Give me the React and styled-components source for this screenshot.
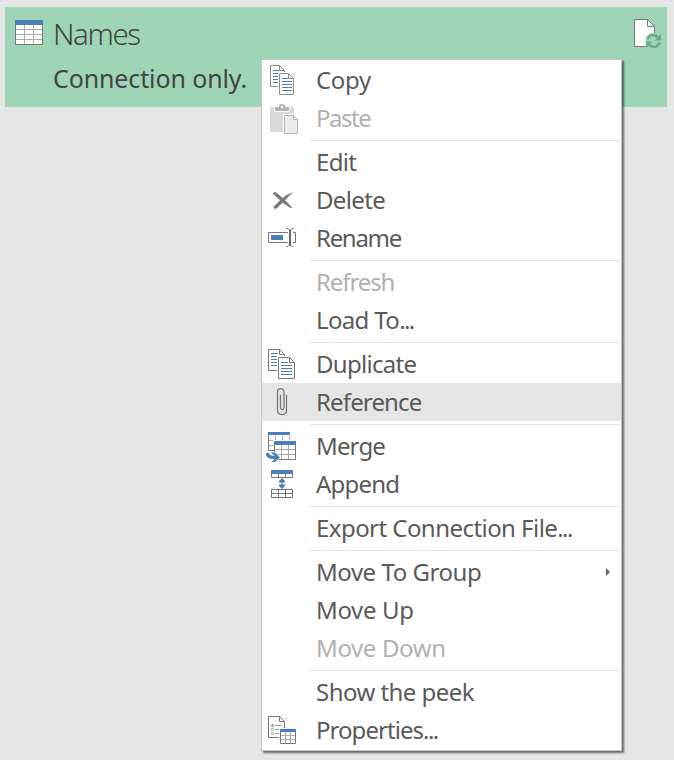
import React from "react";
import styled, { createGlobalStyle } from "styled-components";

const GlobalStyle = createGlobalStyle`
  * { box-sizing: border-box; }
  html, body { margin: 0; height: 760px; overflow: hidden; background: #e6e6e6; }
  body { font-family: "Noto Sans", "Open Sans", sans-serif; }
`;

const Page = styled.main`
  position: relative;
  width: 674px;
  height: 760px;
  padding: 7px 7px 0 5px;
  background: #e6e6e6;
`;

const QueryCard = styled.section`
  display: grid;
  grid-template-columns: 48px 1fr 39px;
  height: 100px;
  background: #9fd5b7;
`;

const QueryText = styled.div`
  display: flex;
  flex-direction: column;
  white-space: nowrap;
  color: #444;
`;

const QueryName = styled.h1`
  margin: 5px 0 0;
  height: 44px;
  font-size: 29.5px;
  line-height: 44px;
  font-weight: 300;
  letter-spacing: ${(p) => p.$spacing}px;
`;

const QueryStatus = styled.p`
  margin: 0;
  height: 44px;
  font-size: 25px;
  line-height: 44px;
  letter-spacing: ${(p) => p.$spacing}px;
`;

const Icon = styled.svg`
  display: block;
  flex: none;
  overflow: visible;
`;

const Menu = styled.div`
  position: absolute;
  left: 261px;
  top: 59px;
  width: 361px;
  height: 692px;
  padding: 1px 0;
  background: #fff;
  border: 1px solid #c6c6c6;
  box-shadow: 2px 2px 2px rgba(0, 0, 0, 0.55);
`;

const MenuItem = styled.div`
  display: grid;
  grid-template-columns: 48px 1fr 20px;
  align-items: center;
  height: 38px;
  color: ${(p) => (p.$disabled ? "#b1b1b1" : "#5a5a5a")};
  background: ${(p) => (p.$active ? "#e6e6e6" : "transparent")};
`;

const Label = styled.span`
  padding-left: 6px;
  font-size: 24px;
  line-height: 38px;
  white-space: nowrap;
  letter-spacing: ${(p) => p.$spacing || 0}px;
`;

const Ellipsis = styled.span`
  letter-spacing: -1.6px;
`;

const Separator = styled.div`
  height: 6px;
  padding: 3px 1px 0 48px;

  &::before {
    content: "";
    display: block;
    height: 1px;
    background: #dfe1e4;
  }
`;

const GRAY = "#777";
const BLUE = "#4a80ba";

function MenuIcon({ children }) {
  return <Icon width="48" height="38" viewBox="0 0 48 38" fill="none">{children}</Icon>;
}

function Sheet({ x, y, w, h, lines, stroke = GRAY, lineColor = BLUE }) {
  const f = 5;
  return (
    <g transform={`translate(${x} ${y})`}>
      <path d={`M.5 .5H${w - f - 0.5}L${w - 0.5} ${f + 0.5}V${h - 0.5}H.5Z`} fill="#fff" stroke={stroke} />
      <path d={`M${w - f - 0.5} .5V${f + 0.5}H${w - 0.5}`} stroke={stroke} />
      {lines.map(([ly, x2]) => <path key={ly} d={`M3 ${ly + 0.5}H${x2}`} stroke={lineColor} />)}
    </g>
  );
}

function CopyIcon() {
  return (
    <MenuIcon>
      <Sheet x={8} y={4} w={15} h={22} lines={[[5, 9], [8, 12], [11, 12], [14, 12], [17, 12]]} stroke="#8c8c8c" />
      <path d="M16 11H29L34 16V34H16Z" fill="#fff" />
      <Sheet x={17} y={12} w={15} h={22} lines={[[5, 9], [8, 13], [11, 13], [14, 13], [17, 13]]} stroke="#8c8c8c" />
    </MenuIcon>
  );
}

function DuplicateIcon() {
  return (
    <MenuIcon>
      <Sheet x={6} y={4} w={17} h={22} lines={[[4, 10], [7, 13], [10, 13], [13, 13], [16, 13]]} />
      <path d="M15 11H29L34 16V35H15Z" fill="#fff" />
      <Sheet x={16} y={12} w={17} h={22} lines={[[5, 10], [8, 14], [11, 14], [14, 14], [17, 14]]} />
    </MenuIcon>
  );
}

function PasteIcon() {
  return (
    <MenuIcon>
      <rect x="8" y="8" width="24" height="25" rx="1" fill="#dadada" />
      <path d="M12 7H28V13H12Z" fill="#fff" />
      <path d="M13 8H17V7Q17 5 20 5T23 7V8H27V12H13Z" fill="#b5b5b5" />
      <circle cx="20" cy="8" r="1.2" fill="#fff" />
      <path d="M21 15H34L38 19V36H21Z" fill="#fff" />
      <path d="M22.5 16.5H31.5L35.5 20.5V34.5H22.5Z" fill="#ececec" stroke="#b9b9b9" />
      <path d="M31.5 16.5V20.5H35.5" stroke="#b9b9b9" />
    </MenuIcon>
  );
}

function DeleteIcon() {
  return (
    <MenuIcon>
      <path d="M11 12.5Q12.5 10.5 14.5 12L20.7 17.2Q25 13.2 30.5 11.8Q26 15.5 22.9 19.3L30 26.5H28L20.8 21.6Q17.5 24 15 27Q12.5 28.5 11.5 26Q15 22.5 18.3 19.2Z" fill={GRAY} stroke={GRAY} strokeWidth=".4" />
    </MenuIcon>
  );
}

function RenameIcon() {
  return (
    <MenuIcon>
      <path d="M26 13.5H6.5V23.5H26M31 13.5H33.5V23.5H31" stroke={GRAY} />
      <path d="M9 16H21V21H9Z" fill={BLUE} />
      <path d="M28 11V27" stroke="#666" strokeWidth="2" />
      <path d="M24.5 9.5H26L28 11.5L30 9.5H31.5M24.5 27.5H26L28 25.5L30 27.5H31.5" stroke="#666" />
    </MenuIcon>
  );
}

function ClipIcon() {
  return (
    <MenuIcon>
      <path d="M24.5 12V27.5Q24.5 31.5 20 31.5T15.5 27.5V9Q15.5 5.5 18.5 5.5T22 9V24Q22 26.5 20.3 26.5T18.5 24V12" stroke={GRAY} strokeWidth="1.25" />
    </MenuIcon>
  );
}

function MergeIcon() {
  return (
    <MenuIcon>
      <path d="M6.5 8V23.5H12" stroke={GRAY} />
      <path d="M13.5 9V14M20.5 9V14M27.5 9V14M7 13.5H11M7 18.5H11" stroke="#aaa" />
      <path d="M6 5H28V8H6Z" fill={BLUE} />
      <path d="M11 13H35V18H11Z" fill="#fff" />
      <path d="M12.5 18V32.5H33.5V18" stroke={GRAY} fill="#fff" />
      <path d="M12 14H34V18H12Z" fill={BLUE} />
      <path d="M19.5 18V32M26.5 18V32M13 22.5H33M13 27.5H33" stroke="#aaa" />
      <path d="M3.7 26H6.8Q8 29 12.5 28.8L9 25.5H13L18 30.5L13 35H9.5L12.5 32Q4 32.5 3.7 26Z" fill={BLUE} stroke="#fff" strokeWidth="1.2" paintOrder="stroke" />
    </MenuIcon>
  );
}

function AppendIcon() {
  return (
    <MenuIcon>
      <path d="M9.5 8V12.5H30.5V8M16.5 8V12M23.5 8V12" stroke={GRAY} />
      <path d="M9 5H31V9H9Z" fill={BLUE} />
      <path d="M9.5 24.5H30.5V32.5H9.5ZM9.5 28.5H30.5M16.5 24V33M23.5 24V33" stroke={GRAY} />
      <path d="M20 13L23 16V17.5H17V16ZM20 24L23 21V19.5H17V21Z" fill={BLUE} />
      <path d="M19 15H21V23H19Z" fill={BLUE} />
      <path d="M17 18.5H23" stroke="#fff" opacity=".65" />
    </MenuIcon>
  );
}

function PropertiesIcon() {
  return (
    <MenuIcon>
      <path d="M17 26.5H6.5V5.5H17.5L22.5 10.5V17M17.5 5.5V10.5H22.5" stroke={GRAY} />
      <g stroke="#999">
        <circle cx="10.5" cy="14.5" r="1.1" fill="#999" />
        <circle cx="10.5" cy="18.5" r="1.1" />
        <circle cx="10.5" cy="22.5" r="1.1" />
        <path d="M13 14.5H20M13 18.5H17M13 22.5H17" />
      </g>
      <path d="M18.5 21V32.5H33.5V21" stroke={GRAY} fill="#fff" />
      <path d="M18 18H34V21H18Z" fill={BLUE} />
      <path d="M23.5 21V32M28.5 21V32M19 24.5H33M19 28.5H33" stroke="#aaa" />
    </MenuIcon>
  );
}

function TableIcon() {
  return (
    <Icon width="48" height="50" viewBox="0 0 48 50" fill="none">
      <path d="M10.5 17V37.5H37.5V17Z" fill="#fff" stroke={GRAY} />
      <path d="M10 13H38V18H10Z" fill={BLUE} />
      <path d="M19.5 18V37M28.5 18V37M11 22.5H37M11 27.5H37M11 32.5H37" stroke="#aaa" />
    </Icon>
  );
}

function RefreshPageIcon() {
  return (
    <Icon width="34" height="50" viewBox="0 0 34 50" fill="none">
      <path d="M6.5 12.5H19.5L26.5 19.5V39.5H6.5Z" fill="#fff" stroke={GRAY} />
      <path d="M19.5 12.5V19.5H26.5" stroke={GRAY} />
      <circle cx="25.5" cy="34" r="8.2" fill="#9fd5b7" />
      <g stroke="#70a88f" strokeWidth="2.6">
        <path d="M19.5 32.5Q21 28 25 28Q28 28 30.5 31" />
        <path d="M31.5 35.5Q30 40 26 40Q23 40 20.5 37" />
      </g>
      <path d="M33 27V33.5H26.5ZM18 41V34.5H24.5Z" fill="#70a88f" />
    </Icon>
  );
}

const SubmenuArrow = styled.i`
  width: 0;
  height: 0;
  margin-left: 5px;
  border-left: 4px solid #666;
  border-top: 4px solid transparent;
  border-bottom: 4px solid transparent;
`;

const GROUPS = [
  [
    { label: "Copy", icon: CopyIcon, spacing: -0.35 },
    { label: "Paste", icon: PasteIcon, disabled: true, spacing: -1.5 },
  ],
  [
    { label: "Edit", spacing: -0.7 },
    { label: "Delete", icon: DeleteIcon, spacing: -0.65 },
    { label: "Rename", icon: RenameIcon, spacing: -1.3 },
  ],
  [
    { label: "Refresh", disabled: true, spacing: -1.1 },
    { label: "Load To", more: true, spacing: -0.65 },
  ],
  [
    { label: "Duplicate", icon: DuplicateIcon, spacing: -0.7 },
    { label: "Reference", icon: ClipIcon, active: true, spacing: -0.85 },
  ],
  [
    { label: "Merge", icon: MergeIcon, spacing: -0.85 },
    { label: "Append", icon: AppendIcon, spacing: -0.8 },
  ],
  [{ label: "Export Connection File", more: true, spacing: -0.55 }],
  [
    { label: "Move To Group", submenu: true, spacing: -0.46 },
    { label: "Move Up", spacing: -0.35 },
    { label: "Move Down", disabled: true, spacing: -0.38 },
  ],
  [
    { label: "Show the peek", spacing: -0.55 },
    { label: "Properties", icon: PropertiesIcon, more: true, spacing: -0.95 },
  ],
];

export default function App() {
  return (
    <Page>
      <GlobalStyle />
      <QueryCard>
        <TableIcon />
        <QueryText>
          <QueryName $spacing={-1.4}>Names</QueryName>
          <QueryStatus $spacing={-0.12}>Connection only.</QueryStatus>
        </QueryText>
        <RefreshPageIcon />
      </QueryCard>
      <Menu role="menu">
        {GROUPS.map((items, g) => (
          <React.Fragment key={g}>
            {g > 0 && <Separator />}
            {items.map(({ label, icon: Glyph, disabled, active, submenu, more, spacing }) => (
              <MenuItem key={label} role="menuitem" $disabled={disabled} $active={active}>
                {Glyph ? <Glyph /> : <span />}
                <Label $spacing={spacing}>{label}{more && <Ellipsis>...</Ellipsis>}</Label>
                {submenu && <SubmenuArrow />}
              </MenuItem>
            ))}
          </React.Fragment>
        ))}
      </Menu>
    </Page>
  );
}
